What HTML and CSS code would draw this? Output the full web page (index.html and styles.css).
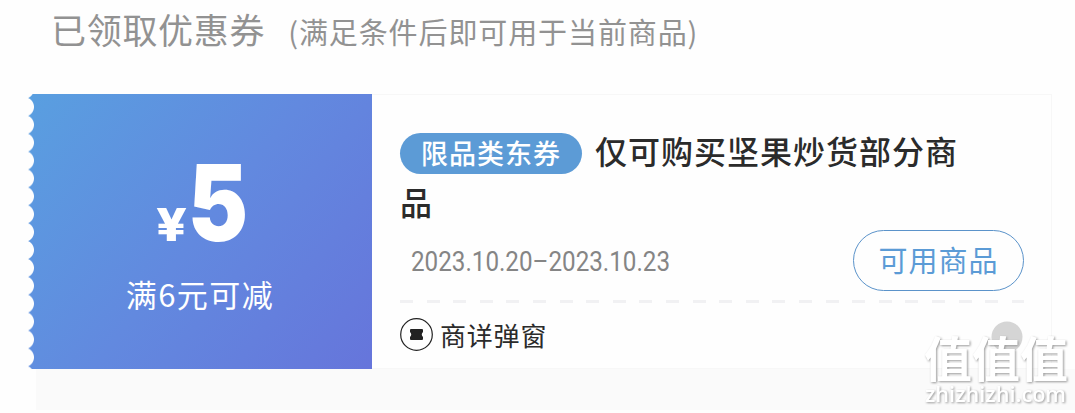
FILE: index.html
```html
<!DOCTYPE html>
<html lang="zh-CN">
<head>
<meta charset="utf-8">
<title>已领取优惠券</title>
<link rel="stylesheet" href="styles.css">
</head>
<body>
<main class="page">
  <header class="heading">
    <h1 class="heading-title">已领取优惠券</h1>
    <span class="heading-note">(满足条件后即可用于当前商品)</span>
  </header>
  <section class="coupon">
    <div class="value">
      <svg class="amount" width="100" height="90" viewBox="0 0 100 90">
        <text class="yen" x="6" y="78" textLength="31" lengthAdjust="spacingAndGlyphs">¥</text>
        <text class="number" x="38" y="77.500" textLength="60" lengthAdjust="spacingAndGlyphs">5</text>
      </svg>
      <p class="condition">满6元可减</p>
    </div>
    <div class="detail">
      <p class="name"><span class="tag">限品类东券</span>仅可购买坚果炒货部分商品</p>
      <div class="validity">
        <svg class="date" width="262" height="36" viewBox="0 0 262 36">
          <text x="0" y="28" textLength="259" lengthAdjust="spacingAndGlyphs">2023.10.20–2023.10.23</text>
        </svg>
        <a class="button">可用商品</a>
      </div>
      <div class="divider"></div>
      <div class="source">
        <svg width="34" height="34" viewBox="0 0 34 34">
          <circle cx="16.500" cy="16.500" r="15.800" fill="none" stroke="#222" stroke-width="1.200"/>
          <path d="M11 11H22Q23 11 23 12V14Q20.500 16.500 23 19V21Q23 22 22 22H11Q10 22 10 21V19Q12.500 16.500 10 14V12Q10 11 11 11Z" fill="#222"/>
        </svg>
        <span>商详弹窗</span>
      </div>
    </div>
  </section>
  <div class="shade"></div>
  <svg class="watermark" width="160" height="100" viewBox="0 0 160 100">
    <circle cx="92" cy="24" r="15.500" fill="#d5d5d5"/>
    <text class="mark" x="9" y="64" textLength="144">值值值</text>
    <text class="site" x="10" y="89" textLength="141" lengthAdjust="spacingAndGlyphs">zhizhizhi.com</text>
  </svg>
</main>
</body>
</html>
```
FILE: styles.css
```css
* { box-sizing: border-box; }

body {
  margin: 0;
  background: #fefefe;
  font-family: "Noto Sans CJK SC", sans-serif;
}

h1, p { margin: 0; font-weight: inherit; }

.page {
  position: relative;
  width: 1075px;
  height: 413px;
  overflow: hidden;
  display: flex;
  flex-direction: column;
}

.heading {
  height: 94px;
  padding: 4px 0 0 51px;
  display: flex;
  align-items: baseline;
  flex: none;
  color: #929292;
  font-weight: 400;
  white-space: nowrap;
}

.heading-title {
  font-size: 35px;
  line-height: 50px;
  letter-spacing: 0.7px;
}

.heading-note {
  margin-left: 23px;
  font-size: 29px;
  letter-spacing: 0.9px;
}

.coupon {
  display: flex;
  width: 1024px;
  height: 275px;
  margin-left: 28px;
  flex: none;
}

.value {
  width: 344px;
  padding-top: 69px;
  display: flex;
  flex-direction: column;
  align-items: center;
  color: #fff;
  background:
    radial-gradient(circle at -3.8px 9px, #fefefe 9.3px, transparent 10.2px) 0 -14px / 344px 17.9px repeat-y,
    linear-gradient(128deg, #599fe0 0%, #6289df 50%, #6675db 100%);
}

.amount { overflow: visible; }

.yen { font: 800 45px Inter, sans-serif; fill: #fff; }
.number { font: 900 106px Inter, sans-serif; fill: #fff; }

.condition {
  margin-top: 18px;
  font-size: 31px;
  line-height: 46px;
  letter-spacing: 1.500px;
  font-weight: 400;
}

.detail {
  flex: 1;
  padding: 30px 27px 0 28px;
  border: solid #f7f7f7;
  border-width: 1px 1px 1px 0;
  background: #fefefe;
}

.name {
  width: 570px;
  height: 105px;
  color: #2b2b2b;
  font-size: 32px;
  line-height: 51px;
  letter-spacing: 1px;
  font-weight: 500;
}

.tag {
  display: inline-block;
  width: 182px;
  height: 41px;
  margin-right: 13px;
  border-radius: 21px;
  background: #5c9bd6;
  color: #fff;
  font-size: 27px;
  line-height: 40px;
  text-align: center;
  vertical-align: 0;
}

.validity {
  display: flex;
  height: 61px;
  padding-left: 11px;
  align-items: center;
  justify-content: space-between;
}

.date { overflow: visible; }

.date text {
  font: 400 28px Roboto, sans-serif;
  fill: #858585;
}

.button {
  width: 171px;
  height: 61px;
  border: 1px solid #5b93ca;
  border-radius: 31px;
  color: #5b9bd6;
  font-size: 29px;
  line-height: 57px;
  letter-spacing: 1px;
  text-align: center;
}

.divider {
  height: 3px;
  margin-top: 9px;
  background: repeating-linear-gradient(90deg, #f1f1f3 0 13px, transparent 13px 26.600px);
}

.source {
  display: flex;
  align-items: center;
  gap: 6px;
  height: 38px;
  margin-top: 13px;
  color: #2b2b2b;
  font-size: 26px;
  letter-spacing: 0.8px;
}

.source span { margin-top: -1px; }

.shade {
  height: 41px;
  margin: 0 0 0 36px;
  background: #fafafa;
}

.watermark {
  position: absolute;
  left: 915px;
  top: 313px;
}

.watermark text {
  fill: #fff;
  filter: drop-shadow(1.500px 1.500px 1px #999);
}

.mark { font: 700 48px "Noto Sans CJK SC", sans-serif; }
.site { font: 600 22px "Open Sans", sans-serif; }
```
